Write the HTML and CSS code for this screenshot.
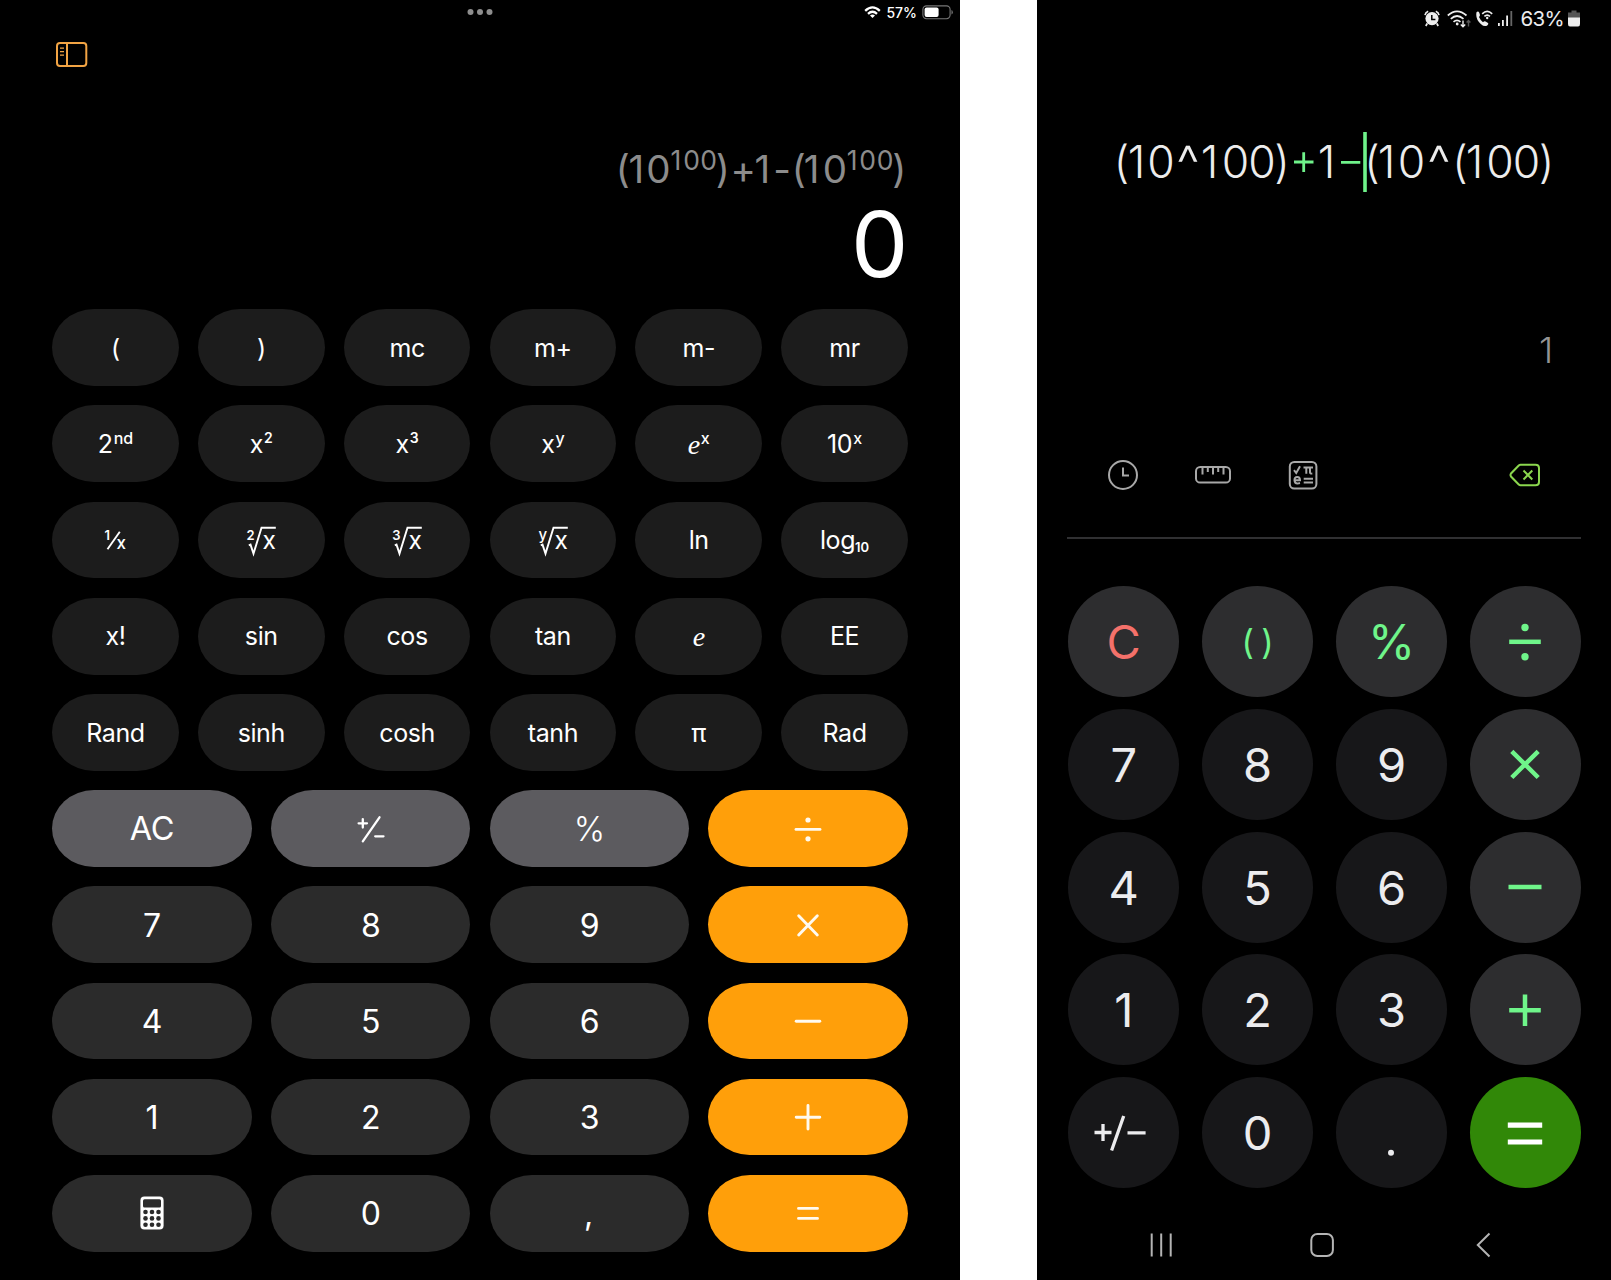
FILE: index.html
```html
<!DOCTYPE html>
<html lang="en">
<head>
<meta charset="utf-8">
<title>Calculators</title>
<link rel="stylesheet" href="styles.css">
</head>
<body>
<main class="compare">
<section class="tablet">
  <header class="tablet-status">
    <svg class="dots" width="26" height="8"><circle cx="3.5" cy="4" r="3"/><circle cx="13" cy="4" r="3"/><circle cx="22.5" cy="4" r="3"/></svg>
    <div class="tablet-tray">
      <svg width="17" height="13" viewBox="0 0 17 13" fill="none" stroke="#fff" stroke-width="2.3"><path d="M1.2 4.8Q8.5-2 15.8 4.8M4 7.8Q8.5 3.6 13 7.8"/><path d="M8.5 12 6 9.6Q8.5 7.6 11 9.6Z" fill="#fff" stroke="none"/></svg>
      <span>57%</span>
      <svg width="32" height="15" viewBox="0 0 32 15"><rect x=".9" y=".9" width="27.2" height="12.8" rx="3.6" fill="none" stroke="#777" stroke-width="1.1"/><rect x="2.6" y="2.5" width="14" height="9.6" rx="2" fill="#fff"/><path d="M29.5 5v4.6q1.3-.5 1.3-2.3T29.5 5z" fill="#777"/></svg>
    </div>
  </header>
  <svg class="sidebar-icon" width="33" height="27" viewBox="0 0 33 27" fill="none" stroke="#f2a444"><rect x="2" y="1.9" width="29.3" height="23.2" rx="3" stroke-width="2"/><path d="M12 2v23" stroke-width="2"/><path d="M5 7.2h4M5 10.7h4M5 14.2h4" stroke-width="1.2"/></svg>
  <svg class="tablet-display" width="960" height="200" viewBox="0 100 960 200">
    <text class="formula" y="182.7" x="622.7 636.3 658.5">(10</text>
    <text class="formula-sup" y="169.5" x="675.8 691.5 708.7">100</text>
    <text class="formula" y="182.7" x="722.7 743.3 762.3 782 798.7 811.6 835">)+1-(10</text>
    <text class="formula-sup" y="169.5" x="852.2 867.5 885">100</text>
    <text class="formula" y="182.7" x="899.3">)</text>
    <text class="total" y="276.8" x="879.7">0</text>
  </svg>
  <div class="pad">
    <div class="row six">
      <div class="key">(</div><div class="key">)</div><div class="key">mc</div><div class="key">m+</div><div class="key">m-</div><div class="key">mr</div>
    </div>
    <div class="row six">
      <div class="key">2<sup class="ltr">nd</sup></div><div class="key">x<sup>2</sup></div><div class="key">x<sup>3</sup></div><div class="key">x<sup class="ltr">y</sup></div><div class="key"><i>e</i><sup class="ltr">x</sup></div><div class="key">10<sup class="ltr">x</sup></div>
    </div>
    <div class="row six">
      <div class="key"><svg class="math" width="34" height="34"><path d="M9.5 26.3 21.8 8.7"/><text class="idx" x="9.3" y="17.3">1</text><text class="den" x="23.2" y="26.3">x</text></svg></div>
      <div class="key"><svg class="math" width="34" height="34"><path d="M4.8 22.3 6.5 21.6 9.5 30.6 17.5 4.7H31.8"/><text class="idx" x="6.5" y="17.3">2</text><text class="rad" x="25.3" y="26.3">x</text></svg></div>
      <div class="key"><svg class="math" width="34" height="34"><path d="M4.8 22.3 6.5 21.6 9.5 30.6 17.5 4.7H31.8"/><text class="idx" x="6.5" y="17.3">3</text><text class="rad" x="25.3" y="26.3">x</text></svg></div>
      <div class="key"><svg class="math" width="34" height="34"><path d="M4.8 22.3 6.5 21.6 9.5 30.6 17.5 4.7H31.8"/><text class="idx y" x="6.8" y="16.6">y</text><text class="rad" x="25.3" y="26.3">x</text></svg></div>
      <div class="key">ln</div><div class="key">log<sub>10</sub></div>
    </div>
    <div class="row six">
      <div class="key">x!</div><div class="key">sin</div><div class="key">cos</div><div class="key">tan</div><div class="key"><i>e</i></div><div class="key">EE</div>
    </div>
    <div class="row six">
      <div class="key">Rand</div><div class="key">sinh</div><div class="key">cosh</div><div class="key">tanh</div><div class="key">π</div><div class="key">Rad</div>
    </div>
    <div class="row four">
      <div class="key fn">AC</div>
      <div class="key fn"><svg class="sign" width="40" height="40"><path d="M7.6 14.3H16M11.8 10.1v8.4M11.8 32.3 28.5 8.3M24.2 27.3h8.3"/></svg></div>
      <div class="key fn percent">%</div>
      <div class="key op"><svg width="40" height="40"><path d="M8 20.4H32"/><circle cx="20" cy="11" r="2.6"/><circle cx="20" cy="29.8" r="2.6"/></svg></div>
    </div>
    <div class="row four">
      <div class="key num">7</div><div class="key num">8</div><div class="key num">9</div>
      <div class="key op"><svg width="40" height="40"><path d="M10.7 10.7 29.3 29.9M29.3 10.7 10.7 29.9"/></svg></div>
    </div>
    <div class="row four">
      <div class="key num">4</div><div class="key num">5</div><div class="key num">6</div>
      <div class="key op"><svg width="40" height="40"><path d="M8.2 20.2H31.8"/></svg></div>
    </div>
    <div class="row four">
      <div class="key num">1</div><div class="key num">2</div><div class="key num">3</div>
      <div class="key op"><svg width="40" height="40"><path d="M8.2 20.2H31.8M20 8.4V32"/></svg></div>
    </div>
    <div class="row four">
      <div class="key num"><svg width="24" height="34"><rect x=".4" y=".5" width="23.2" height="33" rx="4" fill="#fff"/><g fill="#2b2b2b"><rect x="3" y="3.3" width="18" height="8.2" rx="1.5"/><circle cx="5.5" cy="16" r="2.3"/><circle cx="12" cy="16" r="2.3"/><circle cx="18.5" cy="16" r="2.3"/><circle cx="5.5" cy="22.4" r="2.3"/><circle cx="12" cy="22.4" r="2.3"/><circle cx="18.5" cy="22.4" r="2.3"/><circle cx="5.5" cy="28.7" r="2.3"/><circle cx="12" cy="28.7" r="2.3"/><circle cx="18.5" cy="28.7" r="2.3"/></g></svg></div>
      <div class="key num">0</div><div class="key num comma">,</div>
      <div class="key op"><svg width="40" height="40"><path d="M10.5 15.4h19M10.5 25.4h19"/></svg></div>
    </div>
  </div>
</section>

<section class="phone">
  <header class="phone-status">
    <svg width="16" height="17" viewBox="0 0 16 17"><circle cx="8" cy="8.6" r="6.6" fill="#eee"/><path d="M1 5.2Q1.5 2.2 4.2 1.2M15 5.2Q14.5 2.2 11.8 1.2M3.2 13.5 1.8 16M12.8 13.5 14.2 16" stroke="#eee" stroke-width="1.7" fill="none"/><path d="M7.8 5v4.4h3.6" stroke="#000" stroke-width="1.5" fill="none"/></svg>
    <svg class="wifi" width="25" height="18" viewBox="0 0 25 18" fill="none" stroke="#eee" stroke-width="1.7"><path d="M.8 5.5Q10-2.8 19.5 5.5M3.8 8.8Q10 3.2 16.5 8.8M6.5 11.8Q10 8.8 13.5 11.8"/><circle cx="10.2" cy="14" r="1.4" fill="#eee" stroke="none"/><path d="M16 10.5v6M13.8 14.5 16 16.7l2.2-2.2" stroke-width="1.4"/><path d="M21.5 16.5v-6M19.6 12.4l1.9-1.9 1.9 1.9" stroke="#555" stroke-width="1.4"/></svg>
    <svg class="call" width="18" height="17" viewBox="0 0 18 17" fill="none"><path d="M1.5 2.2Q3.2.8 4.3 2.7L5 5Q5 6.2 4 7 5.2 10 8 12.3 9.3 10.9 10.6 11.6L13 13Q13.9 14.2 12.2 15.4 9.5 17.3 5.8 13.9.2 8.8 1.5 2.2z" fill="#eee"/><path d="M7.2 3.8Q12.2-.9 17.2 3.8M9.4 6.4Q12.2 3.7 15 6.4" stroke="#eee" stroke-width="1.6"/><circle cx="12.2" cy="8" r="1.2" fill="#eee"/></svg>
    <svg class="signal" width="15" height="17" viewBox="0 0 15 17"><path d="M0 13h1.8V16H0zM4 10h1.8v6H4zM8.2 5.5H10V16H8.2z" fill="#eee"/><path d="M12.4 1h1.8v15h-1.8z" fill="#666"/></svg>
    <span>63%</span>
    <svg class="cell" width="12" height="17" viewBox="0 0 12 17"><path d="M3.5.5h5v2H12V8H0V2.5h3.5z" fill="#555"/><path d="M0 7.5h12V14q0 2.5-2 2.5H2Q0 16.5 0 14z" fill="#eee"/></svg>
  </header>
  <svg class="phone-display" width="574" height="340" viewBox="1037 80 574 340">
    <text class="entry" y="178" x="1121.5 1136.5 1161 1188 1209.5 1235.5 1262 1282">(10<tspan class="caret" dy="3.5">^</tspan><tspan dy="-3.5">1</tspan>00)</text>
    <text class="entry" y="178" x="1326.5">1</text>
    <text class="entry" y="178" x="1372 1386.5 1411.5 1439 1460 1474.5 1500 1526.5 1546.5">(10<tspan class="caret" dy="3.5">^</tspan><tspan dy="-3.5">(</tspan>100)</text>
    <g fill="none" stroke="#6ff28a" stroke-width="2.8"><path d="M1294 162h19.5M1303.7 152.3v19.6M1341 162.3h19.3"/><path d="M1365 132v60" stroke-width="3.6"/></g>
    <text class="answer" y="362.7" x="1546">1</text>
  </svg>
  <div class="tools">
    <svg width="32" height="32" viewBox="0 0 32 32"><circle cx="16" cy="16" r="14"/><path d="M16 8.5v8h6"/></svg>
    <svg class="ruler" width="36" height="18" viewBox="0 0 36 18"><rect x="1" y="1" width="34" height="15.6" rx="4.2"/><path d="M7.5 1.5v7M12.8 1.5v4.5M18 1.5v7M23.2 1.5v4.5M28.5 1.5v7"/></svg>
    <svg class="sci" width="30" height="30" viewBox="0 0 30 30"><rect x="1.8" y="1.9" width="26.6" height="26.6" rx="4.5"/><path d="M6 10.2 8.2 13 12 6.2M15.500 7.600h9.500M18.300 7.600v6.200M22 7.600v4.800q0 1.400 2.300 1.200M6.500 20.300H12Q12 17 9.200 17T6.500 20.300 9.500 23.600L12 23M15.700 18.800H25M15.700 22.500H25"/></svg>
    <svg class="erase" width="32" height="24" viewBox="0 0 32 24"><path d="M11.500 1.700H26.500Q30 1.700 30 5V19Q30 22.300 26.500 22.300H11.500Q10.500 22.300 9.500 21.300L2 13.500Q1 12 2 10.500L9.500 2.700Q10.500 1.700 11.500 1.700zM14.500 7.500l8.800 9M23.300 7.500l-8.800 9"/></svg>
  </div>
  <hr class="rule">
  <div class="dial">
    <div class="disc light red">C</div>
    <div class="disc light paren">()</div>
    <div class="disc light percent">%</div>
    <div class="disc light"><svg width="60" height="60"><path d="M14.2 29.8H45.8"/><circle cx="30" cy="15.5" r="3.7"/><circle cx="30" cy="44.8" r="3.7"/></svg></div>
    <div class="disc">7</div><div class="disc">8</div><div class="disc">9</div>
    <div class="disc light"><svg width="60" height="60"><path d="M16.8 17.3 43.2 43.5M43.2 17.3 16.8 43.5"/></svg></div>
    <div class="disc">4</div><div class="disc">5</div><div class="disc">6</div>
    <div class="disc light"><svg width="60" height="60"><path d="M13.5 30H46.5"/></svg></div>
    <div class="disc">1</div><div class="disc">2</div><div class="disc">3</div>
    <div class="disc light"><svg width="60" height="60"><path d="M14.2 30.2H45.8M30 14.4V46"/></svg></div>
    <div class="disc"><svg class="pm" width="60" height="60"><path d="M1.5 29.5H18.5M10 21v17M34.5 29.8H52.6M18.6 47.5 30.7 13"/></svg></div>
    <div class="disc">0</div>
    <div class="disc"><svg class="pm" width="60" height="60"><circle cx="30" cy="49.7" r="3"/></svg></div>
    <div class="disc go"><svg width="60" height="60"><path d="M12.8 22.2H47.2M12.8 39H47.2"/></svg></div>
  </div>
  <nav class="nav">
    <svg width="24" height="26"><path d="M2.7 1.5v23M12.2 1.5v23M21.7 1.5v23"/></svg>
    <svg width="24" height="26"><rect x="1.3" y="2" width="21.6" height="22" rx="6"/></svg>
    <svg width="24" height="26"><path d="M17.5 1.5 5.8 13 17.5 24.5"/></svg>
  </nav>
</section>
</main>
</body>
</html>
```

FILE: styles.css
```css
* { box-sizing: border-box; }
body { margin: 0; background: #fff; font-family: Inter, "Liberation Sans", sans-serif; }
svg { display: block; flex: none; }
.compare { display: flex; justify-content: space-between; width: 1611px; height: 1280px; overflow: hidden; }
.tablet { width: 960px; background: #000; color: #fff; display: flex; flex-direction: column; }
.tablet-status { height: 24px; display: grid; grid-template-columns: 1fr 26px 1fr; align-items: center; }
.dots { grid-column: 2; fill: #8e8e8e; }
.tablet-tray { grid-column: 3; display: flex; align-items: center; justify-content: flex-end; padding-right: 6px; font-size: 14px; font-weight: 500; }
.tablet-tray span { margin: 0 5px; }
.sidebar-icon { margin: 17px 0 32px 55px; }
.tablet-display text { text-anchor: middle; }
.formula { font-size: 38.5px; fill: #8c8c8c; }
.formula-sup { font-size: 26.5px; fill: #8c8c8c; }
.total { font-size: 91px; fill: #fff; }
.pad { padding: 9.2px 52.1px 0; display: flex; flex-direction: column; gap: 19.4px; }
.row { display: grid; gap: 19.1px; height: 76.8px; }
.six { grid-template-columns: repeat(6, 1fr); }
.four { grid-template-columns: repeat(4, 1fr); }
.key { display: flex; align-items: center; justify-content: center; padding-top: 1.6px; border-radius: 42px / 38.4px; background: #1c1c1c; font-size: 25px; letter-spacing: -0.4px; line-height: 1; }
.key:has(svg) { padding-top: 0; }
.key sup, .key sub { font-size: 14px; font-weight: 600; line-height: 1; vertical-align: baseline; letter-spacing: 0; }
.key sup { transform: translateY(-7px); margin-left: 1px; }
.key sup.ltr { font-size: 16px; font-weight: 500; }
.key sub { transform: translateY(7px); font-size: 13px; }
.key i { font-family: "Liberation Serif", serif; font-size: 28px; }
.math path { fill: none; stroke: #fff; stroke-width: 1.9; }
.math text { fill: #fff; text-anchor: middle; letter-spacing: 0; }
.math .idx { font-size: 13px; font-weight: 600; }
.math .idx.y { font-size: 15px; font-weight: 500; }
.math .rad { font-size: 24.5px; }
.math .den { font-size: 17px; font-weight: 500; }
.key.fn { background: #5c5b5f; font-size: 32.5px; letter-spacing: -0.4px; }
.key.percent { font-size: 33.5px; font-weight: 300; }
.key.num { background: #2b2b2b; font-size: 32px; }
.key.comma { padding-right: 2px; }
.key.op { background: #ff9f0a; }
.op svg { fill: #fffaf0; stroke: #fffaf0; stroke-width: 2.9; stroke-linecap: round; }
.op circle { stroke: none; }
.sign { fill: none; stroke: #fff; stroke-width: 2.3; stroke-linecap: round; }

.phone { width: 574px; background: #000; color: #ececee; display: flex; flex-direction: column; }
.phone-status { height: 37px; margin-bottom: 43px; padding-right: 31px; display: flex; align-items: center; justify-content: flex-end; font-size: 20.5px; }
.phone-status .wifi { margin-left: 7px; }
.phone-status .call { margin-left: 3px; }
.phone-status .signal { margin-left: 5px; }
.phone-status span { margin-left: 8px; letter-spacing: -0.7px; }
.phone-status .cell { margin-left: 4px; }
.phone-display text { text-anchor: middle; }
.entry { font-size: 44.5px; font-weight: 300; fill: #ececec; }
.caret { font-size: 52px; }
.answer { font-size: 36px; font-weight: 300; fill: #949494; }
.tools { height: 110px; padding: 0 70px 0 70.2px; display: flex; align-items: center; fill: none; stroke: #a8a8a8; stroke-width: 2; }
.tools .ruler { margin-left: 56.3px; }
.tools .sci { margin-left: 56.3px; }
.tools .erase { margin-left: auto; stroke: #8bd64e; }
.rule { width: 514px; height: 2px; margin: 7px 30px 47px; border: 0; background: #303032; }
.dial { padding: 0 30px 0 31.2px; display: grid; grid-template-columns: repeat(4, 111px); justify-content: space-between; grid-auto-rows: 111px; row-gap: 11.75px; }
.disc { display: flex; align-items: center; justify-content: center; border-radius: 50%; background: #171719; font-size: 47px; line-height: 1; }
.disc.light { background: #2d2d2f; color: #6ff58a; }
.disc.red { color: #f4716a; }
.disc.paren { font-size: 34px; letter-spacing: 7.5px; padding-left: 7.5px; }
.disc.percent { font-size: 48px; }
.disc svg { stroke: currentColor; fill: currentColor; stroke-width: 4.5; margin-left: -1px; }
.disc circle { stroke: none; }
.disc .pm { stroke-width: 3.3; }
.disc.go { background: #318808; color: #fff; }
.disc.go svg { stroke-width: 5.2; }
.nav { display: flex; justify-content: space-between; padding: 43.5px 115.5px 0 111.5px; fill: none; stroke: #b4b4b4; stroke-width: 2; }
```
